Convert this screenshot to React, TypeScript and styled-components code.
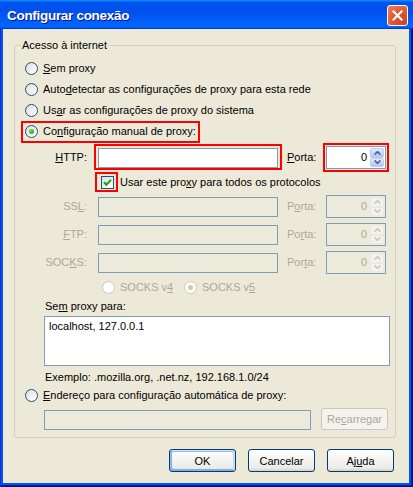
import React from 'react';
import styled, { createGlobalStyle } from 'styled-components';

const Global = createGlobalStyle`
  html, body { margin: 0; padding: 0; background: #fff; }
  body { font-family: "Liberation Sans", Arial, sans-serif; font-size: 11px; color: #000; }
  #root { width: 413px; height: 487px; }
  * { box-sizing: border-box; }
`;

const Window = styled.div`
  width: 413px;
  height: 487px;
  display: flex;
  flex-direction: column;
`;

const TitleBar = styled.div`
  height: 29px;
  flex: none;
  display: flex;
  align-items: center;
  justify-content: space-between;
  padding: 2px 5px 0 7px;
  background: linear-gradient(180deg, #0997ff 0%, #0053ee 8%, #0050ee 40%, #0066ff 88%, #0066ff 93%, #005bff 95%, #003dd7 96%, #003dd7 100%);
`;

const Title = styled.span`
  font-family: "Liberation Sans", Arial, sans-serif;
  font-weight: bold;
  font-size: 13.5px;
  letter-spacing: -0.3px;
  color: #fff;
  text-shadow: 1px 1px #0f1089;
`;

const CloseBtn = styled.div`
  width: 21px;
  height: 21px;
  border: 1px solid #fff;
  border-radius: 3px;
  background: radial-gradient(circle at 85% 85%, #cc4627 0%, #e0512f 45%, #f0805f 100%);
  display: flex;
  align-items: center;
  justify-content: center;
`;

const Frame = styled.div`
  flex: 1;
  display: flex;
  padding: 0 4px 4px 3px;
  background: #0855dd;
  box-shadow: inset 1px 0 #0831d9, inset -1px -1px #00138c, inset -2px -2px #001ea0;
`;

const Client = styled.div`
  flex: 1;
  display: flex;
  flex-direction: column;
  background: #ece9d8;
  padding: 16px 13px 11px 11px;
`;

const Group = styled.div`
  position: relative;
  border: 1px solid #d0d0bf;
  border-radius: 3px;
  padding: 12px 0 7px 0;
  display: flex;
  flex-direction: column;
`;

const Legend = styled.span`
  position: absolute;
  top: -7px;
  left: 6px;
  padding: 0 1px;
  line-height: 13px;
  background: #ece9d8;
`;

const RadioRow = styled.div<{ $indent?: number; $mt?: number; $h?: number }>`
  display: flex;
  align-items: center;
  height: ${(p) => p.$h ?? 21}px;
  padding-left: ${(p) => p.$indent ?? 8}px;
  margin-top: ${(p) => p.$mt ?? 0}px;
`;

const Choice = styled.label<{ $disabled?: boolean; $w?: number }>`
  display: inline-flex;
  align-items: center;
  gap: 5px;
  padding: 0 2px;
  line-height: 13px;
  white-space: nowrap;
  width: ${(p) => (p.$w ? `${p.$w}px` : 'auto')};
  color: ${(p) => (p.$disabled ? '#aca899' : '#000')};
`;

const Circle = styled.span<{ $checked?: boolean; $disabled?: boolean }>`
  position: relative;
  flex: none;
  width: 13px;
  height: 13px;
  border-radius: 50%;
  border: 1px solid ${(p) => (p.$disabled ? '#cac8bb' : '#1c5180')};
  background: ${(p) => (p.$disabled ? '#fff' : 'linear-gradient(135deg, #dcdcd7 0%, #ffffff 90%)')};
  &::after {
    content: '';
    display: ${(p) => (p.$checked ? 'block' : 'none')};
    position: absolute;
    left: 3px;
    top: 3px;
    width: 5px;
    height: 5px;
    border-radius: 50%;
    background: ${(p) => (p.$disabled ? '#cac8bb' : 'radial-gradient(circle at 35% 35%, #63df5e 0%, #21a121 80%)')};
  }
`;

const Mark = styled.span<{ $t: number; $r: number; $b: number; $l: number }>`
  position: relative;
  display: inline-flex;
  &::after {
    content: '';
    position: absolute;
    top: ${(p) => -p.$t}px;
    right: ${(p) => -p.$r}px;
    bottom: ${(p) => -p.$b}px;
    left: ${(p) => -p.$l}px;
    border: 2px solid #ff0000;
    pointer-events: none;
  }
`;

const Key = styled.u`
  text-decoration: underline;
`;

const FieldRow = styled.div<{ $mt?: number }>`
  display: grid;
  grid-template-columns: 83px 189px 39px 60px;
  align-items: center;
  height: 23px;
  margin-top: ${(p) => p.$mt ?? 0}px;
`;

const FieldLabel = styled.span<{ $disabled?: boolean }>`
  justify-self: end;
  margin-right: 11px;
  line-height: 13px;
  white-space: nowrap;
  color: ${(p) => (p.$disabled ? '#aca899' : '#000')};
`;

const PortLabel = styled.span<{ $disabled?: boolean }>`
  line-height: 13px;
  color: ${(p) => (p.$disabled ? '#aca899' : '#000')};
`;

const TextBox = styled.div<{ $disabled?: boolean; $w: number; $h?: number }>`
  width: ${(p) => p.$w}px;
  height: ${(p) => p.$h ?? 20}px;
  border: 1px solid #7f9db9;
  background: ${(p) => (p.$disabled ? '#ebeadb' : '#fff')};
`;

const PortBox = styled.div<{ $disabled?: boolean }>`
  width: 60px;
  height: 23px;
  display: flex;
  border: 1px solid #7f9db9;
  background: ${(p) => (p.$disabled ? '#ebeadb' : '#fff')};
`;

const PortValue = styled.span<{ $disabled?: boolean }>`
  flex: 1;
  text-align: right;
  padding-right: 3px;
  line-height: 21px;
  color: ${(p) => (p.$disabled ? '#aca899' : '#000')};
`;

const Spinner = styled.div`
  width: 15px;
  display: flex;
  flex-direction: column;
  padding: 1px 1px 1px 0;
`;

const SpinBtn = styled.div<{ $disabled?: boolean }>`
  flex: 1;
  display: flex;
  align-items: center;
  justify-content: center;
  border-radius: 2px;
  border: 1px solid ${(p) => (p.$disabled ? '#ebe9e0' : '#bccdf6')};
  background: ${(p) => (p.$disabled ? '#f3f2ec' : 'linear-gradient(180deg, #e3ebfd 0%, #c2d3fa 60%, #b2c5f4 100%)')};
  color: ${(p) => (p.$disabled ? '#c9c7ba' : '#4d6185')};
`;

const CheckRow = styled.div`
  display: flex;
  align-items: center;
  height: 26px;
  padding-left: 86px;
  gap: 6px;
  line-height: 13px;
`;

const CheckBox = styled.span`
  width: 13px;
  height: 13px;
  border: 1px solid #1c5180;
  background: linear-gradient(135deg, #dcdcd7 0%, #ffffff 90%);
  display: flex;
  align-items: center;
  justify-content: center;
`;

const Section = styled.div`
  display: flex;
  flex-direction: column;
  padding: 0 5px 0 29px;
`;

const Caption = styled.span<{ $mt?: number }>`
  line-height: 13px;
  padding-left: 1px;
  margin-top: ${(p) => p.$mt ?? 0}px;
  white-space: nowrap;
`;

const TextArea = styled.div`
  height: 50px;
  margin-top: 3px;
  border: 1px solid #7f9db9;
  background: #fff;
  padding: 3px 4px;
  line-height: 13px;
`;

const AutoRow = styled.div`
  display: flex;
  align-items: flex-end;
  gap: 10px;
  height: 22px;
  margin-top: 2px;
  padding-left: 29px;
`;

const Button = styled.button<{ $default?: boolean; $disabled?: boolean; $h?: number }>`
  width: 67px;
  height: ${(p) => p.$h ?? 23}px;
  padding: 0;
  font-family: inherit;
  font-size: 11px;
  border-radius: 3px;
  border: 1px solid ${(p) => (p.$disabled ? '#c9c7ba' : '#003c74')};
  color: ${(p) => (p.$disabled ? '#aca899' : '#000')};
  background: ${(p) => (p.$disabled ? '#f4f3ee' : 'linear-gradient(180deg, #ffffff 0%, #ecebe6 86%, #d6d0c5 100%)')};
  box-shadow: ${(p) =>
    p.$default
      ? 'inset -1px 1px #cee7ff, inset 1px 2px #98b8ea, inset -2px 2px #bcd4f6, inset 1px -1px #89ade4, inset 2px -2px #89ade4'
      : 'none'};
`;

const ButtonRow = styled.div`
  display: flex;
  justify-content: flex-end;
  gap: 12px;
  margin-top: 11px;
  padding-right: 2px;
`;

const Arrow = ({ up }: { up?: boolean }) => (
  <svg width="7" height="4" viewBox="0 0 7 4">
    <polyline
      points={up ? '0.6,3.6 3.5,0.7 6.4,3.6' : '0.6,0.4 3.5,3.3 6.4,0.4'}
      fill="none"
      stroke="currentColor"
      strokeWidth="1.6"
    />
  </svg>
);

const Port = ({ disabled }: { disabled?: boolean }) => (
  <PortBox $disabled={disabled}>
    <PortValue $disabled={disabled}>0</PortValue>
    <Spinner>
      <SpinBtn $disabled={disabled}>
        <Arrow up />
      </SpinBtn>
      <SpinBtn $disabled={disabled}>
        <Arrow />
      </SpinBtn>
    </Spinner>
  </PortBox>
);

export default function App() {
  return (
    <>
      <Global />
      <Window>
        <TitleBar>
          <Title>Configurar conexão</Title>
          <CloseBtn>
            <svg width="11" height="11" viewBox="0 0 11 11">
              <path d="M1.5 1.5 L9.5 9.5 M9.5 1.5 L1.5 9.5" stroke="#fff" strokeWidth="2.2" strokeLinecap="square" />
            </svg>
          </CloseBtn>
        </TitleBar>
        <Frame>
          <Client>
            <Group>
              <Legend>Acesso à internet</Legend>
              <RadioRow>
                <Choice>
                  <Circle />
                  <span>
                    <Key>S</Key>em proxy
                  </span>
                </Choice>
              </RadioRow>
              <RadioRow>
                <Choice>
                  <Circle />
                  <span>
                    Auto<Key>d</Key>etectar as configurações de proxy para esta rede
                  </span>
                </Choice>
              </RadioRow>
              <RadioRow>
                <Choice>
                  <Circle />
                  <span>
                    Us<Key>a</Key>r as configurações de proxy do sistema
                  </span>
                </Choice>
              </RadioRow>
              <RadioRow>
                <Mark $t={4} $r={2} $b={5} $l={2}>
                  <Choice>
                    <Circle $checked />
                    <span>
                      Co<Key>n</Key>figuração manual de proxy:
                    </span>
                  </Choice>
                </Mark>
              </RadioRow>

              <FieldRow $mt={4}>
                <FieldLabel>
                  <Key>H</Key>TTP:
                </FieldLabel>
                <Mark $t={4} $r={4} $b={2} $l={4} style={{ width: 180 }}>
                  <TextBox $w={180} />
                </Mark>
                <PortLabel>
                  <Key>P</Key>orta:
                </PortLabel>
                <Mark $t={3} $r={3} $b={3} $l={3}>
                  <Port />
                </Mark>
              </FieldRow>

              <CheckRow>
                <Mark $t={4} $r={4} $b={3} $l={6}>
                  <CheckBox>
                    <svg width="9" height="9" viewBox="0 0 9 9">
                      <polyline points="1,4.2 3.4,6.8 8,1.8" fill="none" stroke="#21a121" strokeWidth="2" />
                    </svg>
                  </CheckBox>
                </Mark>
                <span>
                  Usar este pro<Key>x</Key>y para todos os protocolos
                </span>
              </CheckRow>

              <FieldRow>
                <FieldLabel $disabled>
                  SS<Key>L</Key>:
                </FieldLabel>
                <TextBox $w={180} $disabled />
                <PortLabel $disabled>
                  P<Key>o</Key>rta:
                </PortLabel>
                <Port disabled />
              </FieldRow>
              <FieldRow $mt={5}>
                <FieldLabel $disabled>
                  <Key>F</Key>TP:
                </FieldLabel>
                <TextBox $w={180} $disabled />
                <PortLabel $disabled>
                  Po<Key>r</Key>ta:
                </PortLabel>
                <Port disabled />
              </FieldRow>
              <FieldRow $mt={5}>
                <FieldLabel $disabled>
                  SOC<Key>K</Key>S:
                </FieldLabel>
                <TextBox $w={180} $disabled />
                <PortLabel $disabled>
                  Por<Key>t</Key>a:
                </PortLabel>
                <Port disabled />
              </FieldRow>

              <RadioRow $indent={85} $mt={2} $h={23}>
                <Choice $disabled $w={82}>
                  <Circle $disabled />
                  <span>
                    SOCKS v<Key>4</Key>
                  </span>
                </Choice>
                <Choice $disabled>
                  <Circle $disabled $checked />
                  <span>
                    SOCKS v<Key>5</Key>
                  </span>
                </Choice>
              </RadioRow>

              <Section>
                <Caption $mt={1}>
                  Se<Key>m</Key> proxy para:
                </Caption>
                <TextArea>localhost, 127.0.0.1</TextArea>
                <Caption $mt={5}>Exemplo: .mozilla.org, .net.nz, 192.168.1.0/24</Caption>
              </Section>

              <RadioRow $mt={1}>
                <Choice>
                  <Circle />
                  <span>
                    <Key>E</Key>ndereço para configuração automática de proxy:
                  </span>
                </Choice>
              </RadioRow>

              <AutoRow>
                <TextBox $w={267} $disabled />
                <Button $disabled $h={22}>
                  Re<Key>c</Key>arregar
                </Button>
              </AutoRow>
            </Group>

            <ButtonRow>
              <Button $default>OK</Button>
              <Button>Cancelar</Button>
              <Button>
                Aj<Key>u</Key>da
              </Button>
            </ButtonRow>
          </Client>
        </Frame>
      </Window>
    </>
  );
}
